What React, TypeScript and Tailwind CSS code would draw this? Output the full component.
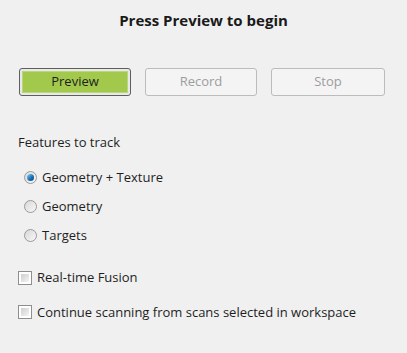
const font = { fontFamily: '"Open Sans", "Noto Sans", sans-serif' };

function Radio({ checked, label }: { checked?: boolean; label: string }) {
  return (
    <label className="flex items-center gap-[5px] h-[29px]">
      <span className="relative w-[13px] h-[13px] rounded-full border border-[#9a9a9a] bg-gradient-to-br from-[#d8d8d8] to-[#f8f8f8] flex items-center justify-center">
        {checked && (
          <span className="w-[7px] h-[7px] rounded-full bg-gradient-to-br from-[#8fd0f5] via-[#1a7cc4] to-[#0d3f75]" />
        )}
      </span>
      <span className="text-[13px] text-[#1e1e1e]">{label}</span>
    </label>
  );
}

function Check({ label }: { label: string }) {
  return (
    <label className="flex items-center gap-[5px]">
      <span className="w-[14px] h-[14px] border border-[#8e8f8f] bg-white p-[2px]">
        <span className="block w-full h-full bg-gradient-to-br from-[#cfcfcf] to-[#f4f4f4]" />
      </span>
      <span className="text-[13px] text-[#1e1e1e]">{label}</span>
    </label>
  );
}

export default function App() {
  return (
    <div className="w-[407px] h-[353px] bg-[#f0f0f0] overflow-hidden" style={font}>
      <h1 className="pt-[9px] text-center text-[15px] font-bold text-[#1a1a1a] leading-[22px]">
        Press Preview to begin
      </h1>

      <div className="flex gap-[14px] pl-[19px] mt-[37px]">
        <button className="w-[112px] h-[28px] rounded-[3px] border border-[#5f5f5f] bg-[#e8e8e8] p-[2px]">
          <span className="flex h-full items-center justify-center bg-[#a2c94c] text-[13px] text-[#1e1e1e] border border-[#b8d77a]">
            Preview
          </span>
        </button>
        <button className="w-[112px] h-[28px] rounded-[3px] border border-[#bcbcbc] bg-[#f4f4f4] text-[13px] text-[#9d9d9d]">
          Record
        </button>
        <button className="w-[114px] h-[28px] rounded-[3px] border border-[#bcbcbc] bg-[#f4f4f4] text-[13px] text-[#9d9d9d]">
          Stop
        </button>
      </div>

      <div className="pl-[18px] mt-[37px] text-[13px] text-[#1e1e1e] leading-[18px]">
        Features to track
      </div>

      <div className="pl-[24px] mt-[12px] flex flex-col">
        <Radio checked label="Geometry + Texture" />
        <Radio label="Geometry" />
        <Radio label="Targets" />
      </div>

      <div className="pl-[18px] mt-[18px] flex flex-col gap-[15px]">
        <Check label="Real-time Fusion" />
        <Check label="Continue scanning from scans selected in workspace" />
      </div>
    </div>
  );
}
